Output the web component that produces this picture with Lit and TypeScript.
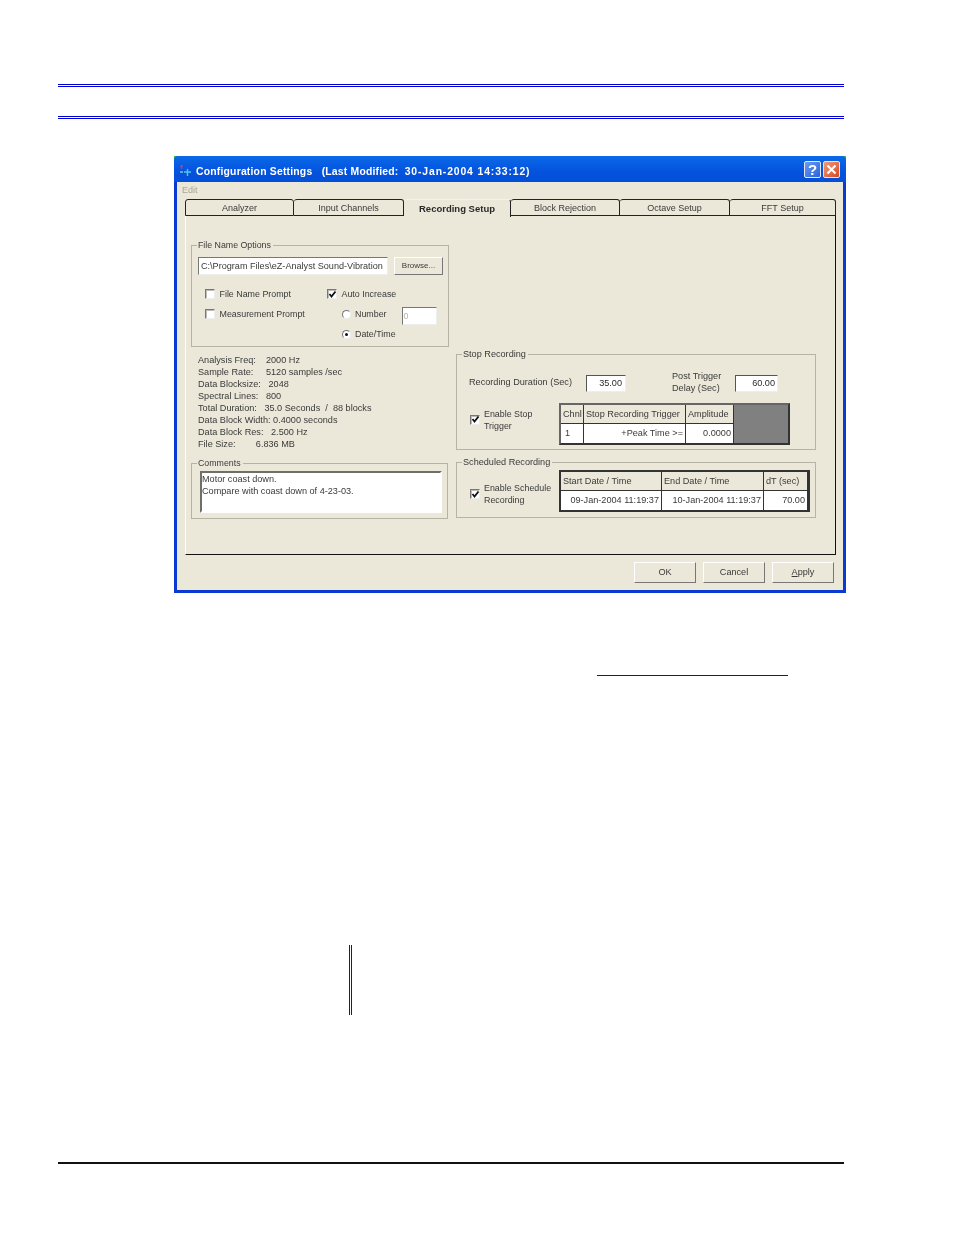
import { LitElement, html, css, svg } from "lit";
import { customElement } from "lit/decorators.js";

const check = svg`<svg class="tick" viewBox="0 0 9 9" width="9" height="9"><path d="M1.5 4 L3.5 6.5 L7.5 1.5" fill="none" stroke="#111" stroke-width="1.8"/></svg>`;

@customElement("app-root")
export class AppRoot extends LitElement {
  static styles = css`
    :host { display: block; width: 954px; height: 1235px; background: #fff; font-family: "Liberation Sans", Arial, sans-serif; overflow: hidden; }
    .page { width: 786px; margin-left: 58px; padding-top: 84px; box-sizing: border-box; height: 1235px; display: flex; flex-direction: column; }
    .dbl { height: 3px; border-top: 1px solid #0000d0; border-bottom: 1px solid #0000d0; box-sizing: border-box; flex: none; }
    .dbl.second { margin-top: 29px; }
    .dialog { flex: none; width: 672px; height: 437px; margin: 37px 0 0 116px; box-sizing: border-box; background: linear-gradient(#3cc040 0 5px, #0a3ad0 5px); color: #2a2a2a; font-size: 9.15px; line-height: 12px; display: flex; flex-direction: column; filter: blur(0.3px); }
    .title { height: 26px; flex: none; border-radius: 4px 4px 0 0; background: linear-gradient(#0a6ae6 0, #0860e4 25%, #0453dd 60%, #0350d8 100%); color: #fff; display: flex; align-items: center; padding: 6px 6px 0 5px; box-sizing: border-box; }
    .title svg.app { flex: none; margin: -3px 4px 0 0; }
    .title b { font-size: 10.4px; letter-spacing: 0.2px; white-space: pre; flex: 1; }
    .title b .date { letter-spacing: 0.87px; }
    .cap { width: 17px; height: 17px; border-radius: 2px; border: 1px solid #dfe8fb; box-sizing: border-box; margin: -5px 0 0 2px; color: #fff; font: bold 15px/15px "Liberation Sans", sans-serif; text-align: center; background: linear-gradient(135deg, #6a9cf0, #2a62da); display: flex; align-items: center; justify-content: center; }
    .cap.close { background: linear-gradient(135deg, #ef9a7c, #d84a20); }
    .body { flex: 1; margin: 0 3px 3px 3px; background: #ebe8d9; display: flex; flex-direction: column; min-height: 0; }
    .menu { height: 17px; flex: none; padding: 2px 0 0 5px; box-sizing: border-box; color: #a9a698; font-size: 9px; line-height: 13px; }
    .tabs { display: flex; margin-left: 8px; height: 17px; flex: none; position: relative; z-index: 1; }
    .tab { box-sizing: border-box; height: 17px; border: 1px solid #222; border-left-width: 0; border-radius: 3px 3px 0 0; text-align: center; line-height: 16px; color: #3a3a3a; font-size: 9px; }
    .tab:first-child { border-left-width: 1px; }
    .tab.on { font-weight: bold; border: 0; border-top: 1px solid #f4f2ea; border-right: 1px solid #222; height: 18px; background: #ebe8d9; font-size: 9.5px; line-height: 17px; color: #2a2a2a; }
    .panel { width: 651px; height: 339px; margin-left: 8px; box-sizing: border-box; flex: none; border-left: 1px solid #fff; border-right: 1px solid #111; border-bottom: 1px solid #111; padding: 29px 0 0 5px; display: flex; gap: 7px; }
    .col { display: flex; flex-direction: column; }
    .left { width: 258px; }
    .right { width: 360px; padding-top: 109px; }
    .group { border: 1px solid #b5b3a6; box-sizing: border-box; position: relative; }
    .group > .legend { position: absolute; left: 5px; top: -7px; padding: 0 2px 0 1px; background: #ebe8d9; line-height: 12px; color: #3a3a3a; white-space: nowrap; }
    .file { height: 102px; padding: 11px 5px 0 6px; }
    .file > .legend { font-size: 8.8px; }
    .row { display: flex; align-items: center; }
    .input { background: #fff; border: 1px solid; border-color: #777 #eee #eee #777; box-sizing: border-box; white-space: nowrap; overflow: hidden; }
    .path { width: 190px; height: 18px; padding-left: 2px; line-height: 16px; font-size: 9.1px; color: #3a3a3a; }
    .btn { border: 1px solid; border-color: #fff #777 #777 #fff; box-sizing: border-box; text-align: center; background: #ebe8d9; color: #3a3a3a; }
    .browse { width: 49px; height: 18px; margin-left: 6px; line-height: 16px; font-size: 8px; }
    .opts { display: grid; grid-template-columns: 122px auto; padding: 9px 0 0 7px; font-size: 8.9px; }
    .check { display: flex; align-items: center; gap: 4.5px; height: 20px; white-space: nowrap; color: #3a3a3a; }
    .cb { width: 10px; height: 10px; background: #fff; border: 1px solid; border-color: #777 #eee #eee #777; box-shadow: inset 1px 1px 0 #bbb; box-sizing: border-box; flex: none; display: flex; align-items: center; justify-content: center; }
    .cb .tick { flex: none; }
    .radio-row { display: flex; align-items: center; gap: 4px; height: 20px; margin-left: 15px; white-space: nowrap; color: #3a3a3a; }
    .radio { width: 9px; height: 9px; border-radius: 50%; background: #fff; border: 1px solid; border-color: #777 #eee #eee #777; box-sizing: border-box; flex: none; display: flex; align-items: center; justify-content: center; }
    .radio i { width: 3px; height: 3px; border-radius: 50%; background: #111; }
    .num { width: 35px; height: 18px; margin: 4px 0 0 11px; padding-left: 1px; line-height: 16px; color: #b5b3a6; }
    .info { padding: 7px 0 0 7px; height: 116px; box-sizing: border-box; line-height: 12px; color: #3a3a3a; white-space: pre; }
    .comments { height: 56px; padding: 7px 6px 0 8px; width: 257px; }
    .comments > .legend { font-size: 8.8px; }
    .memo { height: 42px; width: 242px; border: 2px solid; border-color: #6f6f6a #fff #fff #6f6f6a; background: #fff; box-sizing: border-box; line-height: 12px; color: #3a3a3a; }
    .stop { height: 96px; padding: 13px 0 0 12px; }
    .top-row { display: flex; align-items: center; height: 28px; }
    .dur { width: 117px; white-space: nowrap; color: #3a3a3a; }
    .val { width: 40px; height: 17px; margin-top: 3px; text-align: right; padding-right: 3px; line-height: 15px; border-color: #555 #eee #eee #555; }
    .post { margin-left: 46px; width: 63px; line-height: 12px; color: #3a3a3a; white-space: nowrap; }
    .val2 { width: 43px; padding-right: 2px; }
    .trigger-row { display: flex; align-items: flex-start; margin-top: 7px; }
    .en { display: flex; align-items: center; gap: 4px; padding-left: 1px; box-sizing: border-box; width: 90px; line-height: 12px; color: #3a3a3a; white-space: nowrap; font-size: 8.9px; flex: none; }
    .en.stoptrig { height: 33px; }
    .en.schedtrig { height: 48px; }
    .grid { border: 2px solid; border-color: #666 #333 #333 #666; box-sizing: border-box; display: grid; background: #fff; height: 42px; flex: none; }
    .stopgrid { width: 231px; grid-template-columns: 23px 102px 48px 54px; grid-template-rows: 19px 19px; }
    .schedgrid { width: 251px; grid-template-columns: 101px 102px 44px; grid-template-rows: 19px 19px; border-color: #333; }
    .cell { box-sizing: border-box; border-right: 1px solid #333; line-height: 18px; padding: 0 2px; white-space: nowrap; overflow: hidden; color: #3a3a3a; }
    .cell.id { padding-left: 4px; }
    .hd { background: #ebe8d9; border-bottom: 1px solid #333; }
    .r { text-align: right; }
    .void { background: #808080; grid-row: 1 / 3; grid-column: 4; border: 0; }
    .sched { height: 56px; margin-top: 12px; padding: 7px 0 0 12px; display: flex; align-items: flex-start; }
    .footer { flex: 1; display: flex; justify-content: flex-end; gap: 7px; padding: 7px 9px 0 0; }
    .fbtn { width: 62px; height: 21px; line-height: 19px; }
    .u { text-decoration: underline; }
    .link { flex: none; width: 191px; height: 1px; background: #5a0a14; margin: 82px 0 0 539px; }
    .vbar { flex: none; width: 3px; height: 70px; border-left: 1px solid #5a0a14; border-right: 1px solid #5a0a14; box-sizing: border-box; margin: 269px 0 0 291px; }
    .foot { flex: none; height: 2px; background: #111; margin-top: 147px; }
  `;

  render() {
    return html`
      <div class="page">
        <div class="dbl"></div>
        <div class="dbl second"></div>
        <div class="dialog">
          <div class="title">
            <svg class="app" width="13" height="13" viewBox="0 0 13 13"><path d="M1 2h3M2.5 1v4" stroke="#c04080" stroke-width="1.2" fill="none"/><path d="M5 8h7M8.5 5v7" stroke="#50c8e8" stroke-width="1.4" fill="none"/><path d="M1 8h3" stroke="#9adcf0" stroke-width="1.2"/></svg>
            <b>Configuration Settings   (Last Modified:  <span class="date">30-Jan-2004 14:33:12)</span></b>
            <div class="cap">?</div>
            <div class="cap close"><svg width="11" height="11" viewBox="0 0 11 11"><path d="M1.5 1.5 L9.5 9.5 M9.5 1.5 L1.5 9.5" stroke="#fff" stroke-width="2.2" fill="none"/></svg></div>
          </div>
          <div class="body">
            <div class="menu">Edit</div>
            <div class="tabs">
              <div class="tab" style="width:109px">Analyzer</div>
              <div class="tab" style="width:110px">Input Channels</div>
              <div class="tab on" style="width:107px">Recording Setup</div>
              <div class="tab" style="width:109px">Block Rejection</div>
              <div class="tab" style="width:110px">Octave Setup</div>
              <div class="tab" style="width:106px">FFT Setup</div>
            </div>
            <div class="panel">
              <div class="col left">
                <div class="group file">
                  <div class="legend">File Name Options</div>
                  <div class="row">
                    <div class="input path">C:\\Program Files\\eZ-Analyst Sound-Vibration</div>
                    <div class="btn browse">Browse...</div>
                  </div>
                  <div class="opts">
                    <div class="check"><span class="cb"></span>File Name Prompt</div>
                    <div class="check"><span class="cb">${check}</span>Auto Increase</div>
                    <div class="check"><span class="cb"></span>Measurement Prompt</div>
                    <div class="radio-row"><span class="radio"></span>Number<div class="input num">0</div></div>
                    <div></div>
                    <div class="radio-row"><span class="radio"><i></i></span>Date/Time</div>
                  </div>
                </div>
                <div class="info">Analysis Freq:    2000 Hz
Sample Rate:     5120 samples /sec
Data Blocksize:   2048
Spectral Lines:   800
Total Duration:   35.0 Seconds  /  88 blocks
Data Block Width: 0.4000 seconds
Data Block Res:   2.500 Hz
File Size:        6.836 MB</div>
                <div class="group comments">
                  <div class="legend">Comments</div>
                  <div class="memo">Motor coast down.<br />Compare with coast down of 4-23-03.</div>
                </div>
              </div>
              <div class="col right">
                <div class="group stop">
                  <div class="legend">Stop Recording</div>
                  <div class="top-row">
                    <div class="dur">Recording Duration (Sec)</div>
                    <div class="input val">35.00</div>
                    <div class="post">Post Trigger<br />Delay (Sec)</div>
                    <div class="input val val2">60.00</div>
                  </div>
                  <div class="trigger-row">
                    <div class="en stoptrig"><span class="cb">${check}</span><span>Enable Stop<br />Trigger</span></div>
                    <div class="grid stopgrid">
                      <div class="cell hd">Chnl</div>
                      <div class="cell hd">Stop Recording Trigger</div>
                      <div class="cell hd">Amplitude</div>
                      <div class="cell void"></div>
                      <div class="cell id">1</div>
                      <div class="cell r">+Peak Time &gt;=</div>
                      <div class="cell r">0.0000</div>
                    </div>
                  </div>
                </div>
                <div class="group sched">
                  <div class="legend">Scheduled Recording</div>
                  <div class="en schedtrig"><span class="cb">${check}</span><span>Enable Schedule<br />Recording</span></div>
                  <div class="grid schedgrid">
                    <div class="cell hd">Start Date / Time</div>
                    <div class="cell hd">End Date / Time</div>
                    <div class="cell hd">dT (sec)</div>
                    <div class="cell r">09-Jan-2004 11:19:37</div>
                    <div class="cell r">10-Jan-2004 11:19:37</div>
                    <div class="cell r">70.00</div>
                  </div>
                </div>
              </div>
            </div>
            <div class="footer">
              <div class="btn fbtn">OK</div>
              <div class="btn fbtn">Cancel</div>
              <div class="btn fbtn"><span class="u">A</span>pply</div>
            </div>
          </div>
        </div>
        <div class="link"></div>
        <div class="vbar"></div>
        <div class="foot"></div>
      </div>
    `;
  }
}
